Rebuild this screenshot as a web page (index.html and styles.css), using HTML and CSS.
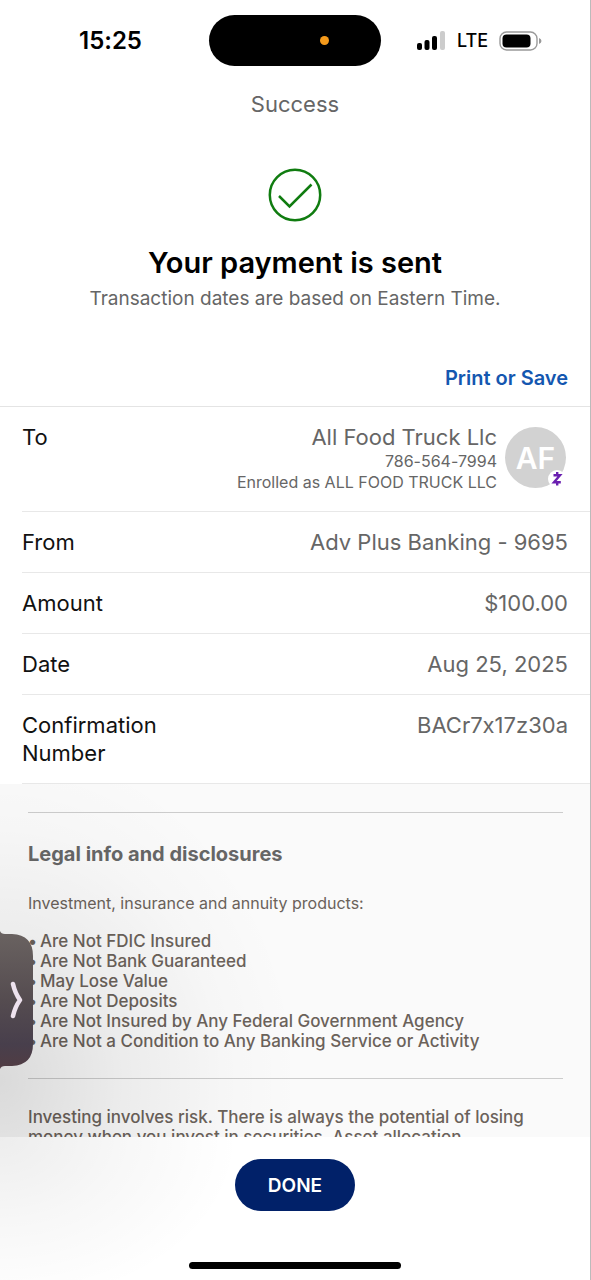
FILE: index.html
```html
<!DOCTYPE html>
<html lang="en">
<head>
<meta charset="utf-8">
<meta name="viewport" content="width=device-width, initial-scale=1">
<title>Success</title>
<link rel="stylesheet" href="styles.css">
</head>
<body>
<div class="app">
  <div class="status">
    <div class="status-time">15:25</div>
    <div class="island"><span class="island-dot"></span></div>
    <div class="status-icons">
      <svg class="signal" viewBox="0 0 30 20" aria-hidden="true">
        <rect x="1" y="12" width="5" height="7" rx="2"/>
        <rect x="8.500" y="9" width="5" height="10" rx="2"/>
        <rect x="16" y="5" width="5" height="14" rx="2"/>
        <rect x="24" y="0" width="5" height="19" rx="2" fill="#ccc"/>
      </svg>
      <span>LTE</span>
      <svg class="battery" viewBox="0 0 44 20" aria-hidden="true">
        <rect x="1" y="1" width="37" height="18" rx="6.500" fill="none" stroke="#999" stroke-width="1.400"/>
        <rect x="3.500" y="3.500" width="28" height="13" rx="4"/>
        <path d="M40 7v6q2.500-1 2.500-3t-2.500-3z" fill="#999"/>
      </svg>
    </div>
  </div>

  <header class="head">
    <p class="head-title">Success</p>
    <svg class="check" viewBox="0 0 54 54" aria-hidden="true">
      <circle cx="27" cy="27" r="25.200"/>
      <path d="M11 28l10.500 10.500L43.500 16.500"/>
    </svg>
    <h1 class="headline">Your payment is sent</h1>
    <p class="subline">Transaction dates are based on Eastern Time.</p>
    <a class="print" href="#">Print or Save</a>
  </header>

  <dl class="details">
    <div class="row row-payee">
      <dt>To</dt>
      <dd class="payee">
        <div>
          <div>All Food Truck Llc</div>
          <div class="small">786-564-7994</div>
          <div class="small">Enrolled as ALL FOOD TRUCK LLC</div>
        </div>
        <div class="avatar">AF
          <svg class="zelle" viewBox="0 0 18 18" aria-hidden="true">
            <circle cx="9" cy="9" r="9" fill="#fff"/>
            <path d="M5.500 5.200H12L6 12.200h6.800M9.200 2v3M9.200 12.500v3" fill="none" stroke="#6a1fb0" stroke-width="2.400"/>
          </svg>
        </div>
      </dd>
    </div>
    <div class="row"><dt>From</dt><dd>Adv Plus Banking - 9695</dd></div>
    <div class="row"><dt>Amount</dt><dd>$100.00</dd></div>
    <div class="row"><dt>Date</dt><dd>Aug 25, 2025</dd></div>
    <div class="row"><dt>Confirmation Number</dt><dd>BACr7x17z30a</dd></div>
  </dl>

  <section class="legal">
    <h2 class="legal-title">Legal info and disclosures</h2>
    <p class="legal-intro">Investment, insurance and annuity products:</p>
    <ul class="legal-list">
      <li>Are Not FDIC Insured</li>
      <li>Are Not Bank Guaranteed</li>
      <li>May Lose Value</li>
      <li>Are Not Deposits</li>
      <li>Are Not Insured by Any Federal Government Agency</li>
      <li>Are Not a Condition to Any Banking Service or Activity</li>
    </ul>
    <p class="legal-risk">Investing involves risk. There is always the potential of losing money when you invest in securities. Asset allocation,</p>
    <div class="shade"></div>
  </section>

  <footer class="foot">
    <button class="done" type="button">DONE</button>
    <div class="home-bar"></div>
  </footer>

  <button class="side-tab" type="button" aria-label="Expand">
    <svg viewBox="0 0 34 144" aria-hidden="true">
      <defs><linearGradient id="tab" x1="0" y1="0" x2="0" y2="1">
        <stop offset="0" stop-color="#6a6361"/><stop offset=".5" stop-color="#554c50"/>
        <stop offset=".82" stop-color="#483f4c"/><stop offset="1" stop-color="#513c43"/>
      </linearGradient></defs>
      <path d="M0 3Q1 6 5 6H12Q33 7 33 28V116Q33 137 12 138H5Q1 138 0 141Z" fill="url(#tab)"/>
      <path d="M13 56Q15 65 20 72Q15 79 13 88" fill="none" stroke="#eee2ee" stroke-width="4.500" stroke-linecap="round" stroke-linejoin="round"/>
    </svg>
  </button>
</div>
</body>
</html>
```
FILE: styles.css
```css
* { box-sizing: border-box; margin: 0; padding: 0; }

body {
  font-family: Inter, "Liberation Sans", sans-serif;
  font-feature-settings: "calt" 0;
  color: #111;
  background: #fff;
}

.app {
  position: relative;
  display: flex;
  flex-direction: column;
  height: 100vh;
  overflow: hidden;
  border-right: 1px solid #bbb;
}

.status {
  display: grid;
  grid-template-columns: 1fr 172px 1fr;
  align-items: center;
  padding-top: 15px;
  color: #000;
}
.status-time {
  padding-left: 12px;
  text-align: center;
  font-size: 24px;
  font-weight: 600;
}
.island {
  display: flex;
  align-items: center;
  justify-content: flex-end;
  height: 51px;
  padding-right: 52px;
  border-radius: 26px;
  background: #000;
}
.island-dot {
  width: 9px;
  height: 9px;
  border-radius: 50%;
  background: #f59a1b;
}
.status-icons {
  display: flex;
  align-items: center;
  gap: 11px;
  padding-left: 35px;
  font-size: 18px;
  font-weight: 500;
}
.signal { width: 30px; height: 20px; }
.battery { width: 44px; height: 20px; }

.head {
  display: flex;
  flex-direction: column;
  align-items: center;
  padding: 24px 22px 14px;
  border-bottom: 1px solid #e4e4e4;
  color: #666;
}
.head-title { font-size: 22px; line-height: 28px; }
.check {
  width: 54px;
  height: 54px;
  margin-top: 50px;
  fill: none;
  stroke: #107c10;
  stroke-width: 2.5;
}
.headline {
  margin-top: 22px;
  font-size: 29px;
  line-height: 38px;
  font-weight: 600;
  color: #000;
}
.subline { margin-top: 4px; font-size: 19px; line-height: 26px; }
.print {
  align-self: flex-end;
  margin-top: 52px;
  font-size: 20px;
  line-height: 28px;
  font-weight: 600;
  color: #1457b0;
  text-decoration: none;
}

.details {
  padding-left: 22px;
  font-size: 22px;
  line-height: 28px;
}
.row {
  display: flex;
  justify-content: space-between;
  padding: 16px 22px 16px 0;
  border-bottom: 1px solid #e8e8e8;
}
.row dt { width: 160px; }
.row dd { color: #666; text-align: right; }
.row-payee { padding-bottom: 18px; }
.payee { display: flex; gap: 8px; }
.small { font-size: 16px; line-height: 21px; }
.avatar {
  position: relative;
  display: grid;
  place-items: center;
  width: 61px;
  height: 61px;
  margin: 4px 2px 0 0;
  border-radius: 50%;
  background: #d2d2d2;
  color: #fff;
  font-size: 30px;
  font-weight: 600;
}
.zelle {
  position: absolute;
  right: 0;
  bottom: 0;
  width: 18px;
  height: 18px;
}

.legal {
  position: relative;
  flex: 1;
  min-height: 0;
  overflow: hidden;
  padding: 28px 27px 0 28px;
  background: #fafafa;
  color: #6b625a;
  font-size: 16px;
  line-height: 20px;
}
.legal-title {
  padding-top: 27px;
  border-top: 1px solid #ccc;
  font-size: 20px;
  line-height: 28px;
  font-weight: 700;
  color: #666;
}
.legal-intro { margin-top: 25px; }
.legal-list {
  margin-top: 18px;
  padding-bottom: 27px;
  border-bottom: 1px solid #ccc;
  list-style: none;
  font-size: 17px;
  font-weight: 500;
}
.legal-list li { display: flex; }
.legal-list li::before { content: "•"; width: 12px; }
.legal-risk { margin-top: 28px; font-size: 17px; font-weight: 500; }

.foot {
  display: flex;
  flex-direction: column;
  align-items: center;
  gap: 51px;
  padding: 22px 0 11px;
  background: radial-gradient(ellipse 240px 170px at 0 0, rgba(0,0,0,.07), rgba(0,0,0,.03) 50%, transparent);
}
.done {
  height: 52px;
  padding: 0 33px;
  border: 0;
  border-radius: 26px;
  background: #012169;
  color: #fff;
  font: 600 19px Inter, "Liberation Sans", sans-serif;
}
.home-bar { width: 212px; height: 7px; border-radius: 4px; background: #000; }

.shade {
  position: absolute;
  inset: 0;
  background: radial-gradient(ellipse 300px 340px at 0 84%, rgba(0,0,0,.13), rgba(0,0,0,.06) 40%, rgba(0,0,0,.015) 75%, transparent);
  pointer-events: none;
}
.side-tab {
  position: absolute;
  left: 0;
  bottom: 208px;
  width: 34px;
  height: 144px;
  border: 0;
  background: none;
}
.side-tab svg { display: block; width: 34px; height: 144px; }
```
